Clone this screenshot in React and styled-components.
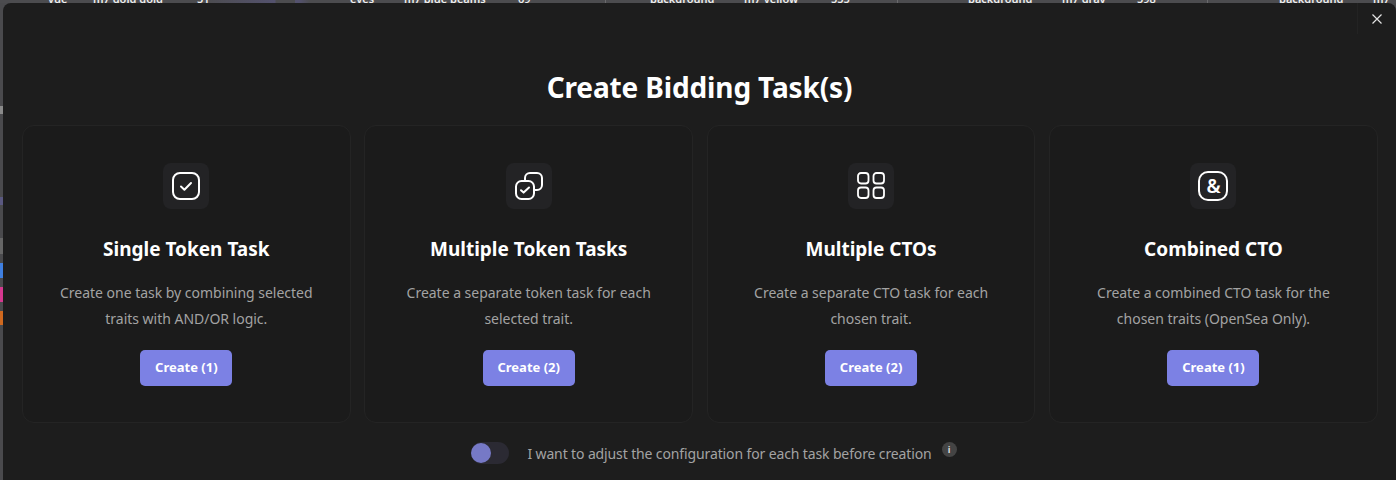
import React from "react";
import styled, { createGlobalStyle } from "styled-components";

const GlobalStyle = createGlobalStyle`
  html, body {
    margin: 0;
    padding: 0;
    height: 100%;
    overflow: hidden;
    background: #4a4a4d;
    font-family: "Noto Sans", "Open Sans", sans-serif;
  }
`;

const Page = styled.div`
  position: relative;
  width: 1396px;
  height: 480px;
  overflow: hidden;
  background: #4a4a4d;
`;

const BackdropRow = styled.div`
  display: flex;
  height: 3px;
  padding-left: 48px;
  overflow: hidden;
  background: linear-gradient(
    90deg,
    #4c4c4f 0 205px,
    #4c4c4f 205px,
    #54526e 275px,
    #4c4c4f 276px 295px,
    #54526e 295px 299px,
    #4c4c4f 310px 605px,
    #6a6a6c 605px 606px,
    #4c4c4f 606px 897px,
    #6a6a6c 897px 898px,
    #4c4c4f 898px 1207px,
    #6a6a6c 1207px 1208px,
    #4c4c4f 1208px
  );
`;

const BackdropCell = styled.span`
  flex: none;
  width: ${(p) => p.$w}px;
  margin-top: -8px;
  font-size: 11px;
  line-height: 14px;
  font-weight: 600;
  color: #eee;
  white-space: nowrap;
`;

const SideChips = styled.div`
  position: absolute;
  left: 0;
  top: 0;
  width: 3px;
  height: 480px;
  display: flex;
  flex-direction: column;
`;

const Chip = styled.div`
  flex: none;
  width: 3px;
  height: ${(p) => p.$h}px;
  margin-top: ${(p) => p.$top}px;
  background: ${(p) => p.$color};
`;

const Modal = styled.div`
  position: absolute;
  left: 3px;
  top: 3px;
  width: 1393px;
  height: 477px;
  box-sizing: border-box;
  padding: 66px 19px 0;
  background: #1d1d1d;
  border-radius: 8px 8px 0 0;
  display: flex;
  flex-direction: column;
  align-items: stretch;
`;

const CloseButton = styled.button`
  position: absolute;
  top: 0;
  right: 0;
  width: 39px;
  height: 31px;
  padding: 0;
  border: 0;
  border-left: 1px solid #232323;
  background: transparent;
  color: #e4e4e4;
  display: flex;
  align-items: center;
  justify-content: center;
`;

const Title = styled.h1`
  margin: 0;
  height: 36px;
  line-height: 36px;
  text-align: center;
  font-size: 28px;
  font-weight: 700;
  letter-spacing: -0.14px;
  color: #fff;
`;

const Cards = styled.div`
  display: grid;
  grid-template-columns: repeat(4, 328.6px);
  column-gap: 13.8px;
  margin-top: 20px;
`;

const Card = styled.div`
  height: 298px;
  box-sizing: border-box;
  padding-top: 37px;
  border: 1px solid #242424;
  border-radius: 12px;
  background: #1b1b1b;
  display: flex;
  flex-direction: column;
  align-items: center;
`;

const IconBox = styled.div`
  width: 46px;
  height: 46px;
  border-radius: 8px;
  background: #232325;
  color: #fff;
  display: flex;
  align-items: center;
  justify-content: center;
`;

const AmpFrame = styled.div`
  width: 30px;
  height: 30px;
  box-sizing: border-box;
  border: 2px solid #fff;
  border-radius: 10px;
  display: flex;
  align-items: center;
  justify-content: center;
  font-size: 19px;
  font-weight: 600;
  line-height: 1;
`;

const CardTitle = styled.h2`
  margin: 26px 0 0;
  height: 28px;
  line-height: 28px;
  font-size: 19px;
  font-weight: 700;
  color: #fff;
`;

const CardText = styled.p`
  margin: 17px 0 0;
  width: 270px;
  text-align: center;
  font-size: 14px;
  line-height: 26px;
  letter-spacing: -0.02px;
  color: #a3a3a3;
`;

const CreateButton = styled.button`
  margin-top: 18px;
  width: 92px;
  height: 36px;
  padding: 0 0 2px;
  border: 0;
  border-radius: 5px;
  background: #7c81e4;
  color: #fff;
  font-family: inherit;
  font-size: 13px;
  font-weight: 700;
`;

const Footer = styled.div`
  display: flex;
  align-items: center;
  justify-content: center;
  margin-top: 17px;
  padding-left: 29px;
  height: 26px;
`;

const Toggle = styled.div`
  position: relative;
  flex: none;
  width: 38px;
  height: 22px;
  border-radius: 11px;
  background: #2b2a33;
`;

const Knob = styled.span`
  position: absolute;
  left: 0;
  top: 0;
  width: 20px;
  height: 20px;
  margin: 1px 0;
  border-radius: 50%;
  background: #7679c6;
`;

const FooterText = styled.span`
  margin-left: 18px;
  font-size: 14px;
  letter-spacing: -0.125px;
  color: #a3a3a3;
  white-space: nowrap;
`;

const InfoDot = styled.span`
  flex: none;
  width: 15px;
  height: 15px;
  margin: 0 0 8px 10px;
  border-radius: 50%;
  background: #444;
  color: #ddd;
  font-size: 9px;
  font-weight: 700;
  line-height: 15px;
  text-align: center;
`;

const CheckIcon = () => (
  <svg width="28" height="28" viewBox="0 0 28 28" fill="none" stroke="currentColor" strokeWidth="2" strokeLinecap="round" strokeLinejoin="round">
    <rect x="1" y="1" width="26" height="26" rx="7" />
    <path d="M9 14.5l3.4 3.2L19 11" />
  </svg>
);

const StackedIcon = () => (
  <svg width="28" height="28" viewBox="0 0 28 28" fill="none" stroke="currentColor" strokeWidth="2" strokeLinecap="round" strokeLinejoin="round">
    <path d="M10 8.500V6a5 5 0 0 1 5-5h7a5 5 0 0 1 5 5v7a5 5 0 0 1-5 5h-2.500" />
    <rect x="1" y="9" width="18" height="18" rx="5.500" />
    <path d="M6 18.200l2.600 2.400L14 15.500" />
  </svg>
);

const GridIcon = () => (
  <svg width="28" height="28" viewBox="0 0 28 28" fill="none" stroke="currentColor" strokeWidth="1.800">
    <rect x="1" y="1" width="10.500" height="10.500" rx="3" />
    <rect x="16.500" y="1" width="10.500" height="10.500" rx="3" />
    <rect x="1" y="15.500" width="10.500" height="10.500" rx="3" />
    <rect x="16.500" y="15.500" width="10.500" height="10.500" rx="3" />
  </svg>
);

const CloseIcon = () => (
  <svg width="12" height="12" viewBox="0 0 12 12" fill="none" stroke="currentColor" strokeWidth="1.200">
    <path d="M1.500 1.500l9 9M10.500 1.500l-9 9" />
  </svg>
);

// what shows of the table behind the modal, width = distance to the next column
const strip = [
  { w: 45, text: "vue" },
  { w: 104, text: "m7 gold gold" },
  { w: 153, text: "51" },
  { w: 54, text: "eyes" },
  { w: 114, text: "m7 blue beams" },
  { w: 132, text: "69" },
  { w: 94, text: "background" },
  { w: 87, text: "m7 yellow" },
  { w: 137, text: "555" },
  { w: 94, text: "background" },
  { w: 75, text: "m7 gray" },
  { w: 142, text: "598" },
  { w: 94, text: "background" },
  { w: 30, text: "m7" },
];

const tasks = [
  {
    icon: <CheckIcon />,
    title: "Single Token Task",
    text: "Create one task by combining selected traits with AND/OR logic.",
    count: 1,
  },
  {
    icon: <StackedIcon />,
    title: "Multiple Token Tasks",
    text: "Create a separate token task for each selected trait.",
    count: 2,
  },
  {
    icon: <GridIcon />,
    title: "Multiple CTOs",
    text: "Create a separate CTO task for each chosen trait.",
    count: 2,
  },
  {
    icon: <AmpFrame>&amp;</AmpFrame>,
    title: "Combined CTO",
    text: "Create a combined CTO task for the chosen traits (OpenSea Only).",
    count: 1,
  },
];

export default function App() {
  return (
    <Page>
      <GlobalStyle />
      <BackdropRow>
        {strip.map((cell) => (
          <BackdropCell key={cell.text + cell.w} $w={cell.w}>
            {cell.text}
          </BackdropCell>
        ))}
      </BackdropRow>
      <SideChips>
        <Chip $top={106} $h={8} $color="#8a8a8a" />
        <Chip $top={83} $h={8} $color="#5a5880" />
        <Chip $top={33} $h={16} $color="#666" />
        <Chip $top={9} $h={15} $color="#3f7fe0" />
        <Chip $top={9} $h={15} $color="#d6388f" />
        <Chip $top={9} $h={14} $color="#d0691f" />
      </SideChips>
      <Modal>
        <CloseButton aria-label="Close">
          <CloseIcon />
        </CloseButton>
        <Title>Create Bidding Task(s)</Title>
        <Cards>
          {tasks.map((task) => (
            <Card key={task.title}>
              <IconBox>{task.icon}</IconBox>
              <CardTitle>{task.title}</CardTitle>
              <CardText>{task.text}</CardText>
              <CreateButton>Create ({task.count})</CreateButton>
            </Card>
          ))}
        </Cards>
        <Footer>
          <Toggle>
            <Knob />
          </Toggle>
          <FooterText>I want to adjust the configuration for each task before creation</FooterText>
          <InfoDot>i</InfoDot>
        </Footer>
      </Modal>
    </Page>
  );
}
